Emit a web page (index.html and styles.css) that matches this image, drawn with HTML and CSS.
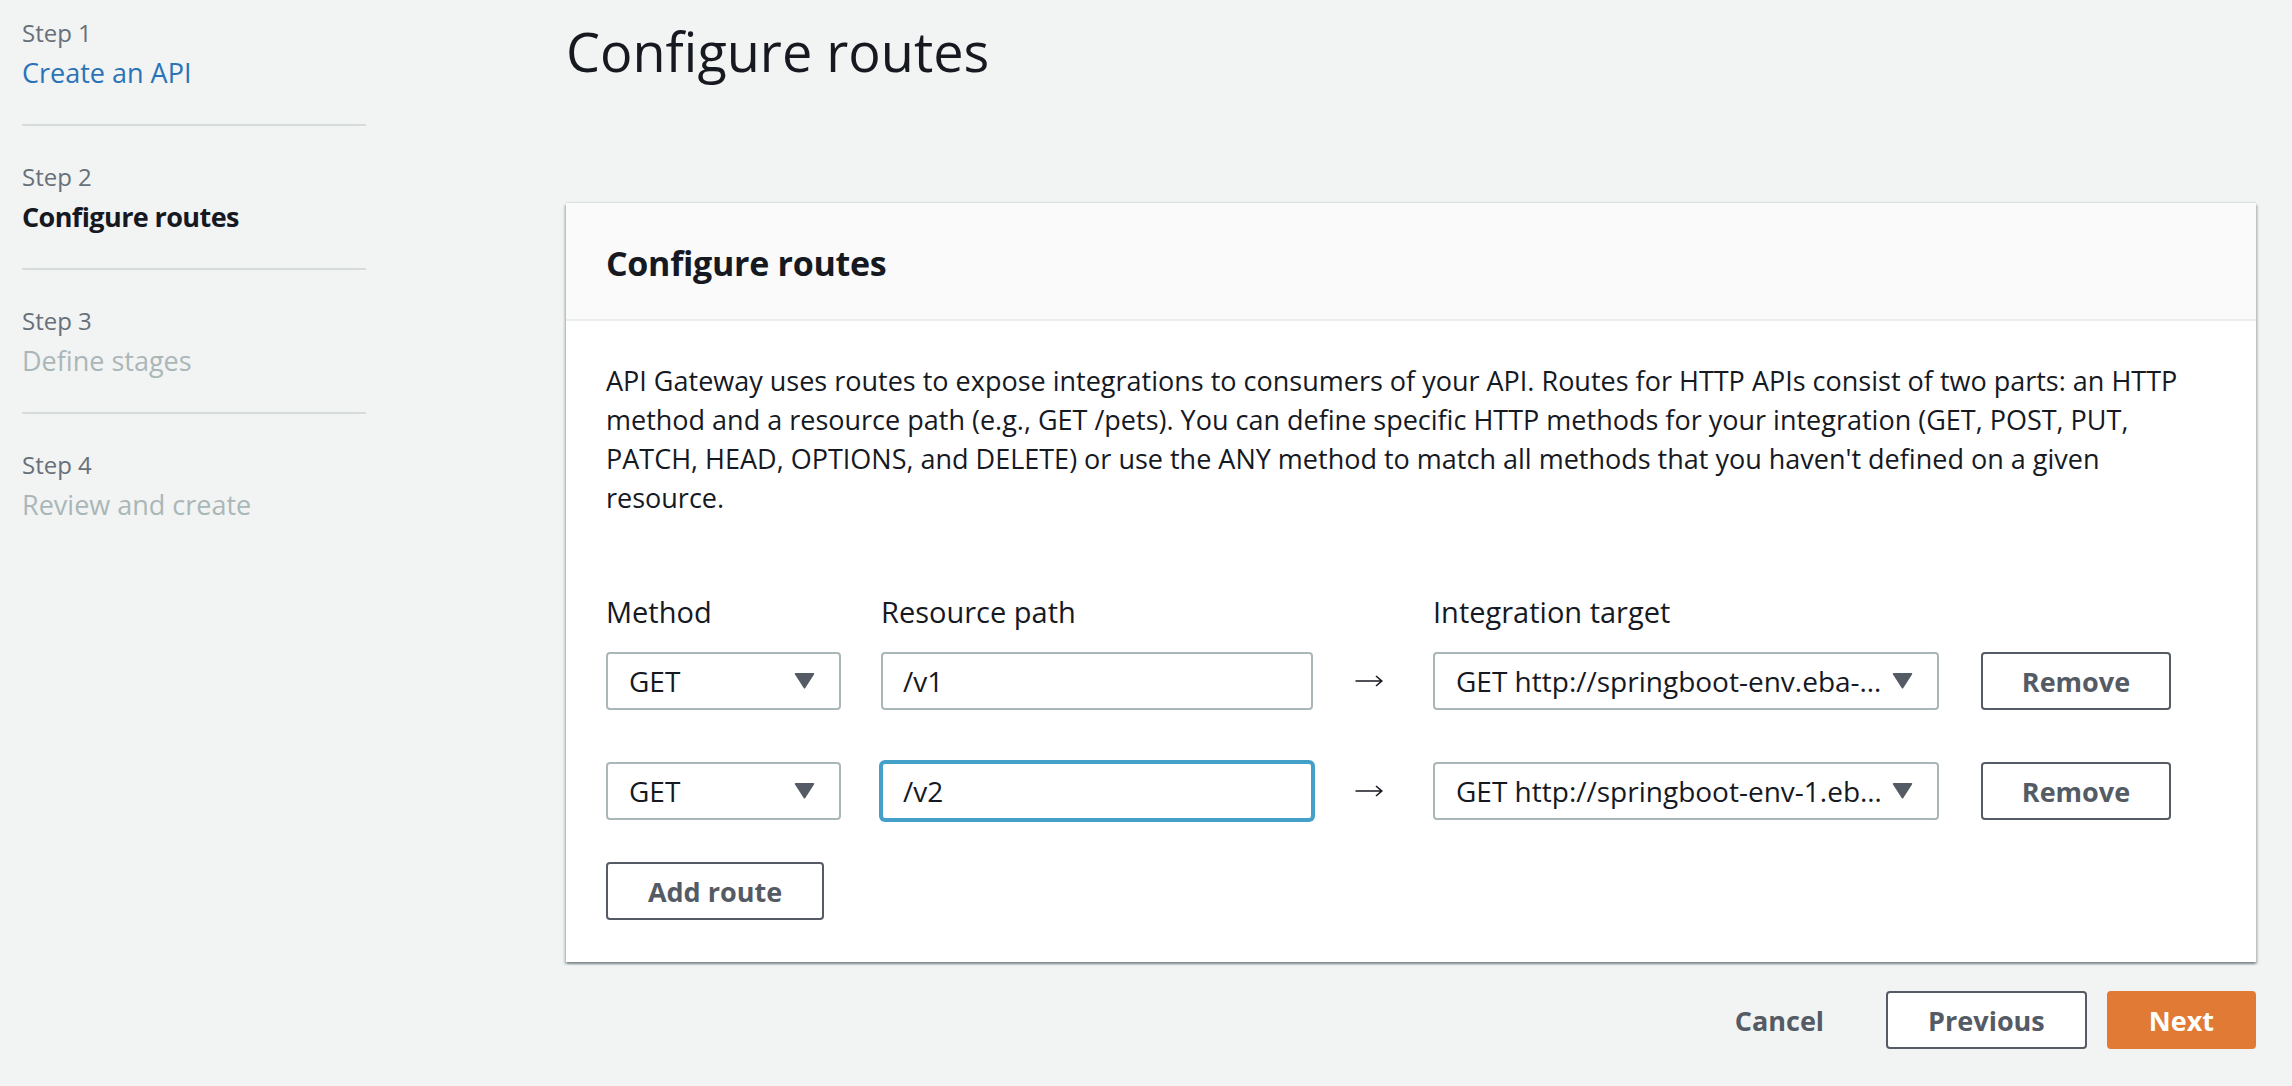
FILE: index.html
```html
<!DOCTYPE html>
<html lang="en">
<head>
<meta charset="utf-8">
<title>Configure routes</title>
<link rel="stylesheet" href="styles.css">
</head>
<body>
<div class="page">
  <nav class="wizard-nav">
    <ol class="steps">
      <li class="step">
        <span class="step-num">Step 1</span>
        <a class="step-title step-link" href="#">Create an API</a>
      </li>
      <li class="step">
        <span class="step-num">Step 2</span>
        <span class="step-title step-active">Configure routes</span>
      </li>
      <li class="step">
        <span class="step-num">Step 3</span>
        <span class="step-title step-disabled">Define stages</span>
      </li>
      <li class="step">
        <span class="step-num">Step 4</span>
        <span class="step-title step-disabled">Review and create</span>
      </li>
    </ol>
  </nav>

  <main class="main">
    <h1 class="page-title">Configure routes</h1>

    <section class="card">
      <header class="card-header">
        <h2 class="card-title">Configure routes</h2>
      </header>
      <div class="card-body">
        <p class="desc">API Gateway uses routes to expose integrations to consumers of your API. Routes for HTTP APIs consist of two parts: an HTTP method and a resource path (e.g., GET /pets). You can define specific HTTP methods for your integration (GET, POST, PUT, PATCH, HEAD, OPTIONS, and DELETE) or use the ANY method to match all methods that you haven't defined on a given resource.</p>

        <div class="routes">
          <div class="route-grid route-labels">
            <span class="field-label">Method</span>
            <span class="field-label">Resource path</span>
            <span></span>
            <span class="field-label">Integration target</span>
            <span></span>
          </div>

          <div class="route-grid route-row">
            <div class="select select-method">
              <span class="select-text">GET</span>
              <svg class="caret" viewBox="0 0 21 16" width="21" height="16"><path d="M1 1.5 Q0.2 0 1.8 0 H19.2 Q20.8 0 20 1.5 L11.3 15 Q10.5 16.2 9.7 15 Z" fill="#545b64"/></svg>
            </div>
            <input class="input" type="text" value="/v1">
            <svg class="arrow" viewBox="0 0 28 14" width="28" height="14"><path d="M0.5 7 H26.5 M21 2 L26.8 7 L21 12" fill="none" stroke="#16191f" stroke-width="1.6"/></svg>
            <div class="select select-target">
              <span class="select-text">GET http://springboot-env.eba-…</span>
              <svg class="caret" viewBox="0 0 21 16" width="21" height="16"><path d="M1 1.5 Q0.2 0 1.8 0 H19.2 Q20.8 0 20 1.5 L11.3 15 Q10.5 16.2 9.7 15 Z" fill="#545b64"/></svg>
            </div>
            <button class="btn btn-remove" type="button">Remove</button>
          </div>

          <div class="route-grid route-row">
            <div class="select select-method">
              <span class="select-text">GET</span>
              <svg class="caret" viewBox="0 0 21 16" width="21" height="16"><path d="M1 1.5 Q0.2 0 1.8 0 H19.2 Q20.8 0 20 1.5 L11.3 15 Q10.5 16.2 9.7 15 Z" fill="#545b64"/></svg>
            </div>
            <input class="input input-focus" type="text" value="/v2">
            <svg class="arrow" viewBox="0 0 28 14" width="28" height="14"><path d="M0.5 7 H26.5 M21 2 L26.8 7 L21 12" fill="none" stroke="#16191f" stroke-width="1.6"/></svg>
            <div class="select select-target">
              <span class="select-text">GET http://springboot-env-1.eb…</span>
              <svg class="caret" viewBox="0 0 21 16" width="21" height="16"><path d="M1 1.5 Q0.2 0 1.8 0 H19.2 Q20.8 0 20 1.5 L11.3 15 Q10.5 16.2 9.7 15 Z" fill="#545b64"/></svg>
            </div>
            <button class="btn btn-remove" type="button">Remove</button>
          </div>
        </div>

        <button class="btn btn-add" type="button">Add route</button>
      </div>
    </section>

    <div class="actions">
      <button class="btn btn-link" type="button">Cancel</button>
      <button class="btn" type="button">Previous</button>
      <button class="btn btn-primary" type="button">Next</button>
    </div>
  </main>
</div>
</body>
</html>
```

FILE: styles.css
```css
* {
  box-sizing: border-box;
}

html, body {
  margin: 0;
  padding: 0;
}

body {
  background: #f2f3f3;
  color: #16191f;
  font-family: "Open Sans", "Noto Sans", "DejaVu Sans", sans-serif;
  overflow: hidden;
}

.page {
  display: flex;
  align-items: flex-start;
}

/* ---------- wizard navigation ---------- */
.wizard-nav {
  flex: none;
  width: 344px;
  margin-left: 22px;
}

.steps {
  list-style: none;
  margin: 0;
  padding: 0;
}

.step {
  padding: 35px 0 31px;
  border-bottom: 2px solid #d5dbdb;
}

.step:first-child {
  padding-top: 17px;
}

.step:last-child {
  border-bottom: none;
}

.step-num {
  display: block;
  font-size: 24px;
  line-height: 32px;
  color: #687078;
}

.step-title {
  display: block;
  margin-top: 4px;
  font-size: 27px;
  line-height: 40px;
}

.step-link {
  color: #2a73b8;
  text-decoration: none;
}

.step-active {
  font-weight: 700;
  letter-spacing: -0.6px;
  color: #16191f;
}

.step-disabled {
  color: #aab7b8;
}

/* ---------- main ---------- */
.main {
  flex: 1;
  min-width: 0;
  margin-left: 200px;
  margin-right: 36px;
  padding-top: 15px;
}

.page-title {
  margin: 0 0 116px;
  font-size: 54px;
  line-height: 72px;
  font-weight: 400;
}

.card {
  background: #fff;
  box-shadow: 0 2px 2px 0 rgba(0, 28, 36, 0.3),
              2px 2px 2px 0 rgba(0, 28, 36, 0.15),
              -2px 2px 2px 0 rgba(0, 28, 36, 0.15),
              0 -1px 1px 0 rgba(0, 28, 36, 0.08);
}

.card-header {
  background: #fafafa;
  border-bottom: 2px solid #eaeded;
  padding: 38px 40px 34px;
}

.card-title {
  margin: 0;
  font-size: 34px;
  line-height: 44px;
  font-weight: 700;
  letter-spacing: -0.3px;
}

.card-body {
  padding: 40px 40px 42px;
}

.desc {
  margin: 0;
  font-size: 27px;
  line-height: 39px;
}

/* ---------- routes form ---------- */
.routes {
  margin-top: 75px;
}

.route-grid {
  display: grid;
  grid-template-columns: 275px 432px 120px 548px 190px;
  align-items: center;
}

.field-label {
  font-size: 29px;
  line-height: 40px;
}

.route-row {
  height: 58px;
  margin-top: 52px;
}

.route-labels + .route-row {
  margin-top: 20px;
}

.select {
  display: flex;
  align-items: center;
  justify-content: space-between;
  height: 58px;
  border: 2px solid #aab7b8;
  border-radius: 4px;
  background: #fff;
  padding: 0 24px 0 21px;
  font-size: 28px;
  color: #16191f;
}

.select-method {
  width: 235px;
}

.select-target {
  width: 506px;
}

.select-text {
  white-space: nowrap;
}

.caret {
  flex: none;
  margin-left: 4px;
}

.input {
  width: 432px;
  height: 58px;
  border: 2px solid #aab7b8;
  border-radius: 4px;
  background: #fff;
  padding: 0 20px;
  font-family: inherit;
  font-size: 28px;
  color: #16191f;
  outline: none;
}

.input-focus {
  border-color: #44a0c8;
  box-shadow: 0 0 0 2px #44a0c8;
}

.arrow {
  margin-left: 42px;
}

/* ---------- buttons ---------- */
.btn {
  height: 58px;
  padding: 0 40px;
  border: 2px solid #545b64;
  border-radius: 4px;
  background: #fff;
  color: #545b64;
  font-family: inherit;
  font-size: 27px;
  font-weight: 700;
  cursor: pointer;
}

.btn-remove {
  width: 190px;
  padding: 0;
}

.btn-add {
  width: 218px;
  padding: 0;
  margin-top: 42px;
}

.btn-link {
  border-color: transparent;
  background: transparent;
}

.btn-primary {
  background: #e07a34;
  border-color: #e07a34;
  color: #fff;
}

.actions {
  display: flex;
  justify-content: flex-end;
  align-items: center;
  gap: 20px;
  margin-top: 29px;
}
```
